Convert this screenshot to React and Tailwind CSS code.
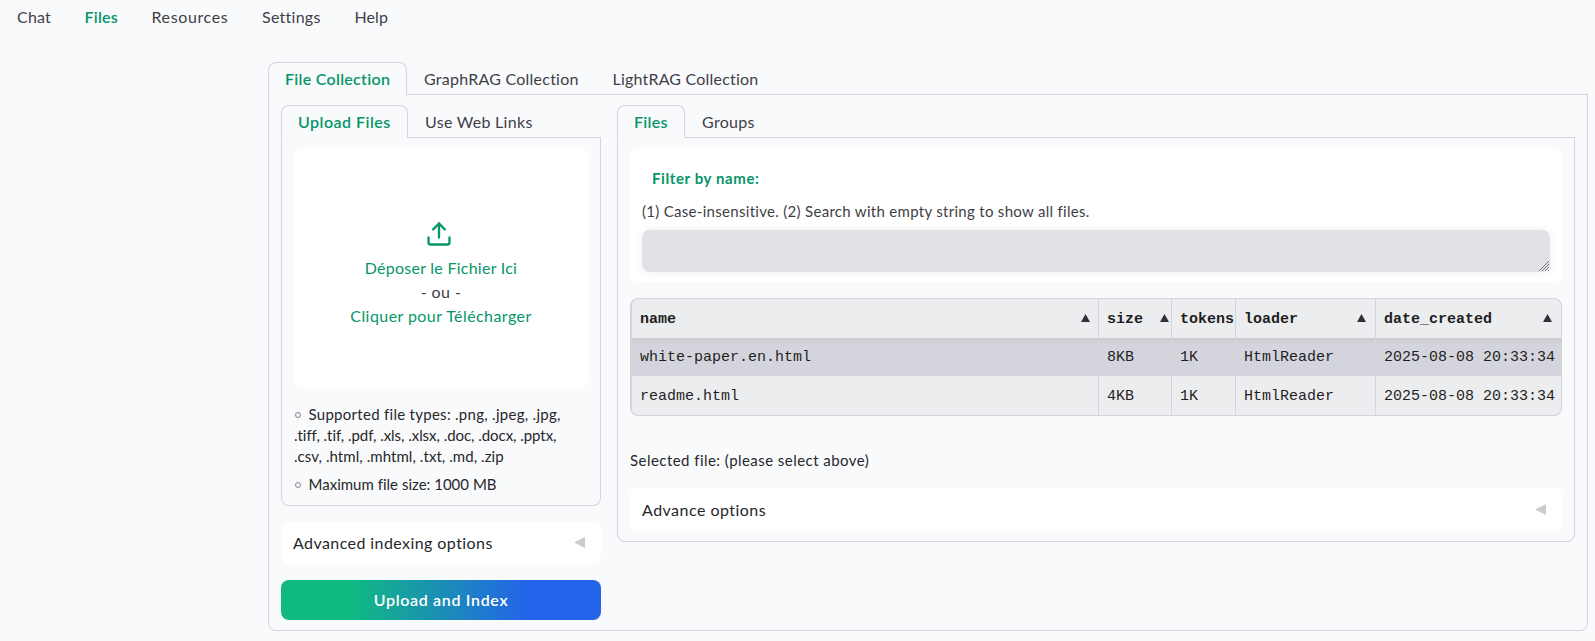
import React from "react";

const tabBase = "flex-none h-[33px] pb-[3px] whitespace-nowrap leading-6 text-left ";
const tabActive = "rounded-t-lg border border-[#d3d5db] !border-b-transparent pl-4 pt-1 text-[#059669] font-semibold ";
const tabIdle = "border-b border-[#d3d5db] pl-[17px] pt-[5px] text-[#3f4046] ";

function TabBar({ tabs }) {
  return (
    <div className="flex" role="tablist">
      {tabs.map((t) => (
        <button key={t.label} role="tab" className={tabBase + (t.active ? tabActive : tabIdle) + t.cls}>
          {t.label}
        </button>
      ))}
      <div className="flex-1 border-b border-[#d3d5db]" />
    </div>
  );
}

function UploadIcon() {
  return (
    <svg className="-ml-[4px] h-7 w-7" viewBox="0 0 24 24" fill="none" stroke="#059669" strokeWidth="2" strokeLinecap="round" strokeLinejoin="round">
      <path d="M21 15v4a2 2 0 0 1-2 2H5a2 2 0 0 1-2-2v-4" />
      <polyline points="17 8 12 3 7 8" />
      <line x1="12" y1="3" x2="12" y2="15" />
    </svg>
  );
}

function Collapsed({ label, cls, labelCls }) {
  return (
    <div className={"flex justify-between rounded-lg bg-white pl-3 pr-4 " + cls}>
      <span className={"leading-6 text-[#27272a] " + labelCls}>{label}</span>
      <svg className="mt-[6px] h-[11px] w-[11px]" viewBox="0 0 11 11">
        <path d="M0 5.5 11 0V11Z" fill="#cccccc" />
      </svg>
    </div>
  );
}

function Bullet() {
  return <span className="mr-[7.5px] ml-[1px] inline-block h-[6px] w-[6px] rounded-full border border-[#85868a] align-[2.5px]" />;
}

const cols = [
  { name: "name", w: "w-[467px]", arrow: "mr-[8.5px]", cells: ["white-paper.en.html", "readme.html"] },
  { name: "size", w: "w-[73px]", arrow: "mr-[2.5px]", cells: ["8KB", "4KB"] },
  { name: "tokens", w: "w-[64px]", arrow: null, cells: ["1K", "1K"] },
  { name: "loader", w: "w-[140px]", arrow: "mr-[9px]", cells: ["HtmlReader", "HtmlReader"] },
  { name: "date_created", w: "flex-1 border-r-0", arrow: "mr-[9px]", cells: ["2025-08-08 20:33:34", "2025-08-08 20:33:34"] },
];
const cellBase = "border-r border-[#d4d4dc] pl-2 leading-6 whitespace-nowrap ";

function FileTable() {
  return (
    <div className="mt-4 h-[118px] overflow-hidden rounded-lg border border-l-2 border-[#d4d4dc] bg-[#ecedef] font-['Liberation_Mono',monospace] text-[15px] text-[#1f1f23]">
      <div className="flex h-[39px]">
        {cols.map((c) => (
          <div key={c.name} className={cellBase + "flex justify-between pt-[9px] font-bold " + c.w}>
            <span>{c.name}</span>
            {c.arrow && (
              <svg className={"mt-[6px] h-2 w-[9px] flex-none " + c.arrow} viewBox="0 0 9 8">
                <path d="M4.5 0 9 8H0Z" fill="#303136" />
              </svg>
            )}
          </div>
        ))}
      </div>
      <div className="flex h-[38px] bg-[#d4d4dd] bg-linear-to-b from-[#cbcbd1] to-[#d4d4dd] to-[6px]">
        {cols.map((c) => (
          <div key={c.name} className={cellBase + "pt-2 " + c.w}>{c.cells[0]}</div>
        ))}
      </div>
      <div className="flex h-[39px]">
        {cols.map((c) => (
          <div key={c.name} className={cellBase + "pt-[9px] " + c.w}>{c.cells[1]}</div>
        ))}
      </div>
    </div>
  );
}

export default function App() {
  return (
    <div className="h-[641px] overflow-hidden bg-[#f9fafc] font-['Lato',sans-serif] text-[16px] text-[#27272a]">
      <nav className="flex h-[62px] pl-[17px] pt-[5px] leading-6 text-[#3f4046]">
        <a className="w-[67.5px] tracking-[0.2px]">Chat</a>
        <a className="w-[67px] font-semibold tracking-[0.235px] text-[#059669]">Files</a>
        <a className="w-[110.5px] tracking-[0.62px]">Resources</a>
        <a className="w-[92.5px] tracking-[0.263px]">Settings</a>
        <a className="tracking-[0.1px]">Help</a>
      </nav>
      <main className="ml-[268px] w-[1320px]">
        <TabBar
          tabs={[
            { label: "File Collection", active: true, cls: "w-[139px] tracking-[0.29px]" },
            { label: "GraphRAG Collection", cls: "w-[188.5px] tracking-[0.24px]" },
            { label: "LightRAG Collection", cls: "w-[180px] tracking-[0.198px]" },
          ]}
        />
        <div className="flex h-[536px] gap-4 rounded-b-lg border border-t-0 border-[#d3d5db] px-3 pt-[10px]">
          <section className="w-[320px] flex-none">
            <TabBar
              tabs={[
                { label: "Upload Files", active: true, cls: "w-[127px] tracking-[0.478px]" },
                { label: "Use Web Links", cls: "w-[143px] tracking-[0.289px]" },
              ]}
            />
            <div className="h-[368px] rounded-b-lg border border-t-0 border-[#d3d5db] px-3 pt-[10px]">
              <div className="flex h-[240px] flex-col items-center rounded-lg bg-white pt-[72px] leading-6 text-[#059669]">
                <UploadIcon />
                <span className="mt-2 tracking-[0.254px]">Déposer le Fichier Ici</span>
                <span className="tracking-[0.434px] text-[#3f4046]">- ou -</span>
                <span className="tracking-[0.43px]">Cliquer pour Télécharger</span>
              </div>
              <div className="mt-4 text-[15px] leading-[21px] whitespace-nowrap">
                <div className="tracking-[0.283px]"><Bullet />Supported file types: .png, .jpeg, .jpg,</div>
                <div className="tracking-[-0.045px]">.tiff, .tif, .pdf, .xls, .xlsx, .doc, .docx, .pptx,</div>
                <div className="tracking-[0.065px]">.csv, .html, .mhtml, .txt, .md, .zip</div>
                <div className="mt-[7px] tracking-[0.01px]"><Bullet />Maximum file size: 1000 MB</div>
              </div>
            </div>
            <Collapsed label="Advanced indexing options" cls="mt-4 h-[42px] pt-[9px]" labelCls="tracking-[0.42px]" />
            <button className="mt-4 block h-10 w-full rounded-lg bg-[linear-gradient(to_right,#10b981_22%,#2563eb_78%)] font-semibold tracking-[0.67px] text-white">
              Upload and Index
            </button>
          </section>
          <section className="w-[958px] flex-none">
            <TabBar
              tabs={[
                { label: "Files", active: true, cls: "w-[68px] tracking-[0.3px]" },
                { label: "Groups", cls: "w-[87px] tracking-[0.317px]" },
              ]}
            />
            <div className="h-[404px] rounded-b-lg border border-t-0 border-[#d3d5db] px-3 pt-[10px]">
              <div className="h-[134px] rounded-lg bg-white px-3 pt-5 text-[15px] leading-[21px]">
                <div className="pl-[10px] font-bold tracking-[0.6px] text-[#059669]">Filter by name:</div>
                <div className="mt-3 tracking-[0.3px] text-[#3f4046]">(1) Case-insensitive. (2) Search with empty string to show all files.</div>
                <div className="relative mt-2 h-[42px]">
                  <textarea className="block h-[42px] w-full resize-none rounded-lg bg-[#e1e2e5] shadow-[0_0_8px_rgba(0,0,0,0.07)]" />
                  <svg className="absolute right-px bottom-px h-[10px] w-[10px]" viewBox="0 0 10 10" stroke="#6f7074" strokeWidth="0.9">
                    <path d="M0 10 10 0M3 10l7-7M6 10l4-4M9 10l1-1" />
                  </svg>
                </div>
              </div>
              <FileTable />
              <div className="mt-[34px] text-[15px] leading-[21px] tracking-[0.45px]">Selected file: (please select above)</div>
              <Collapsed label="Advance options" cls="mt-[17px] h-[43px] pt-[10px]" labelCls="tracking-[0.47px]" />
            </div>
          </section>
        </div>
      </main>
    </div>
  );
}
